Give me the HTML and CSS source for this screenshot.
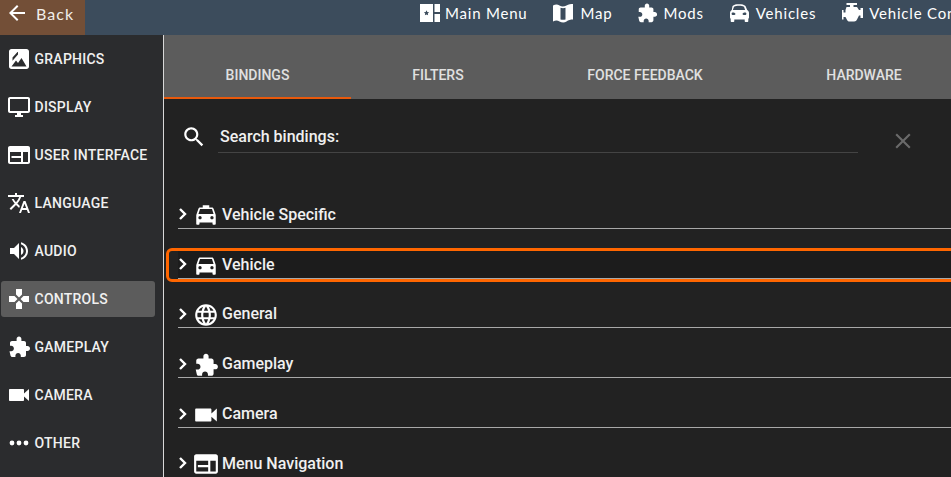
FILE: index.html
```html
<!DOCTYPE html>
<html lang="en">
<head>
<meta charset="utf-8">
<title>Controls</title>
<link rel="stylesheet" href="styles.css">
</head>
<body>
<svg class="defs" width="0" height="0" aria-hidden="true">
  <symbol id="i-car" viewBox="0 0 24 24"><path d="M18.92 6.01C18.72 5.42 18.16 5 17.5 5h-11c-.66 0-1.21.42-1.42 1.01L3 12v8c0 .55.45 1 1 1h1c.55 0 1-.45 1-1v-1h12v1c0 .55.45 1 1 1h1c.55 0 1-.45 1-1v-8l-2.08-5.99zM6.5 16c-.83 0-1.5-.67-1.5-1.5S5.67 13 6.5 13s1.5.67 1.5 1.5S7.33 16 6.5 16zm11 0c-.83 0-1.5-.67-1.5-1.5s.67-1.5 1.5-1.5 1.5.67 1.5 1.5-.67 1.5-1.5 1.5zM5 11l1.5-4.5h11L19 11H5z"/></symbol>
  <symbol id="i-taxi" viewBox="0 0 24 24"><path d="M18.92 6.01C18.72 5.42 18.16 5 17.5 5H15V3H9v2H6.5c-.66 0-1.21.42-1.42 1.01L3 12v8c0 .55.45 1 1 1h1c.55 0 1-.45 1-1v-1h12v1c0 .55.45 1 1 1h1c.55 0 1-.45 1-1v-8l-2.08-5.99zM6.5 16c-.83 0-1.5-.67-1.5-1.5S5.67 13 6.5 13s1.5.67 1.5 1.5S7.33 16 6.5 16zm11 0c-.83 0-1.5-.67-1.5-1.5s.67-1.5 1.5-1.5 1.5.67 1.5 1.5-.67 1.5-1.5 1.5zM5 11l1.5-4.5h11L19 11H5z"/></symbol>
  <symbol id="i-puzzle" viewBox="0 0 24 24"><path d="M20.5 11H19V8c0-1.1-.9-2-2-2h-2.6V3.900C14.400 2.600 13.300 1.500 12 1.500S9.600 2.600 9.600 3.900V6H5C3.900 6 3 6.900 3 8v2.800h1.200c1.490 0 2.700 1.210 2.700 2.700s-1.210 2.700-2.700 2.700H2.500l1 4.300c.2.900.900 1.500 1.800 1.500h3.100v-1.300c0-1.490 1.210-2.700 2.700-2.700 1.490 0 2.700 1.210 2.700 2.700V22H17c1.100 0 2-.900 2-2v-4h1.500c1.380 0 2.500-1.120 2.500-2.500S21.880 11 20.500 11z"/></symbol>
  <symbol id="i-cam" viewBox="0 0 24 24"><path d="M17 10.500V7c0-.55-.45-1-1-1H3c-.55 0-1 .45-1 1v10c0 .55.45 1 1 1h13c.55 0 1-.45 1-1v-3.500l5 4.500V6z"/></symbol>
  <symbol id="i-web" viewBox="0 0 24 24"><path d="M3 3h18c1.100 0 2 .9 2 2v14c0 1.100-.9 2-2 2H3c-1.100 0-2-.9-2-2V5c0-1.100.9-2 2-2zm0 6v10h11v-4H4.500v-2H14V9H3zm13 0v10h5V9h-5z"/></symbol>
</svg>

<header class="topbar">
  <a class="back">
    <svg class="ico back-ico" viewBox="0 0 24 24"><path d="M20 11H7.830l5.590-5.590L12 4l-8 8 8 8 1.410-1.410L7.830 13H20v-2z"/></svg>
    <span>Back</span>
  </a>
  <nav class="mainnav">
    <a class="navitem nav-main">
      <svg class="ico" viewBox="0 0 20 20"><path fill-rule="evenodd" d="M0 1h13v18H0V1zm6.500 6.300l.8 1.700 1.800.2-1.300 1.300.3 1.800-1.600-.9-1.600.9.300-1.800-1.300-1.300 1.800-.2.8-1.700zM14.500 1H20v8h-5.500V1zm0 10H20v8h-5.500v-8z"/></svg>
      <span>Main Menu</span>
    </a>
    <a class="navitem nav-map">
      <svg class="ico" viewBox="0 0 20 20"><path fill-rule="evenodd" d="M0 2.500C2.500 1 4.500 1 6.500 2.500 8.500 3.700 11 3.700 13.500 2.500 15.500 1 18 1 20 1v15.500c-2.500 0-4.500.5-6.500 2-2 1.200-4.500 1.200-7 0-2-1.500-4-1.500-6.500 0V2.500zm7.500 2.300v11.600c1.700.6 3.300.6 5 0V4.800c-1.700.6-3.300.6-5 0z"/></svg>
      <span>Map</span>
    </a>
    <a class="navitem nav-mods">
      <svg class="ico ico-l"><use href="#i-puzzle"/></svg>
      <span>Mods</span>
    </a>
    <a class="navitem nav-veh">
      <svg class="ico" viewBox="0 0 20 20"><path fill-rule="evenodd" d="M3.500 3C5 1.500 7 1.200 10 1.200s5 .3 6.500 1.800l1.700 4c1 .6 1.800 1.500 1.800 3v4.500c0 .6-.3 1-.7 1.200V18c0 .6-.4 1-1 1h-1.600c-.6 0-1-.4-1-1v-1.500H5.300V18c0 .6-.4 1-1 1H2.700c-.6 0-1-.4-1-1v-2.300c-.4-.2-.7-.6-.7-1.200V10c0-1.500.8-2.400 1.800-3l.7-4zM5 3.800L3.900 7h12.200L15 3.800C13.500 3 12 2.800 10 2.800s-3.500.2-5 1zM4 9.500c-.8 0-1.400.5-1.400 1.200s.6 1.300 1.400 1.300h1.500c.6 0 1-.5 1-1.200-.6-.8-1.500-1.300-2.500-1.300zm12 0c-1 0-1.900.5-2.500 1.300 0 .7.400 1.200 1 1.200H16c.8 0 1.400-.6 1.400-1.300s-.6-1.200-1.400-1.200z"/></svg>
      <span>Vehicles</span>
    </a>
    <a class="navitem nav-eng">
      <svg class="ico ico-l" viewBox="0 0 22 20"><path d="M5.500 0h10.500v2H12.500v2H16l2 3h1.500V5H22v10h-2.500v-2.500H18l-2 4c-.5 1-1.500 2-2.800 2H8.500c-1 0-1.800-.6-2.300-1.300L4.500 14H2.500v2.500H1V7h1.500v2.500H4.500V7l1-3H9V2H5.500V0z"/></svg>
      <span>Vehicle Controls</span>
    </a>
  </nav>
</header>

<div class="app">
  <aside class="sidebar">
    <a class="side">
      <svg class="ico" viewBox="0 0 24 24"><path fill-rule="evenodd" d="M2 4.500C2 3.100 3.100 2 4.500 2h15C20.900 2 22 3.100 22 4.500v15c0 1.400-1.100 2.500-2.500 2.500h-15C3.100 22 2 20.900 2 19.500v-15zM10.500 5l-5 5.500v3.200l5.500-6.200V5zM4.500 19.500h15L14.500 11l-3.500 5-2-2.500-4.500 6z"/></svg>
      <span>GRAPHICS</span>
    </a>
    <a class="side">
      <svg class="ico" viewBox="0 0 24 24"><path d="M21 2H3c-1.100 0-2 .9-2 2v12c0 1.100.9 2 2 2h7v2H8v2h8v-2h-2v-2h7c1.100 0 2-.9 2-2V4c0-1.100-.9-2-2-2zm0 14H3V4h18v12z"/></svg>
      <span>DISPLAY</span>
    </a>
    <a class="side">
      <svg class="ico"><use href="#i-web"/></svg>
      <span>USER INTERFACE</span>
    </a>
    <a class="side">
      <svg class="ico" viewBox="0 0 24 24"><path d="M12.870 15.070l-2.540-2.510.03-.03c1.740-1.940 2.980-4.170 3.710-6.530H17V4h-7V2H8v2H1v1.990h11.170C11.500 7.920 10.440 9.750 9 11.350 8.070 10.320 7.300 9.190 6.690 8h-2c.73 1.630 1.730 3.170 2.980 4.560l-5.090 5.020L4 19l5-5 3.110 3.110.76-2.040zM18.500 10h-2L12 22h2l1.120-3h4.750L21 22h2l-4.500-12zm-2.620 7l1.620-4.330L19.120 17h-3.240z"/></svg>
      <span>LANGUAGE</span>
    </a>
    <a class="side">
      <svg class="ico" viewBox="0 0 24 24"><path d="M3 9v6h4l5 5V4L7 9H3zm13.500 3c0-1.770-1.020-3.290-2.500-4.030v8.050c1.480-.73 2.500-2.250 2.500-4.020zM14 3.230v2.060c2.890.86 5 3.540 5 6.710s-2.110 5.850-5 6.710v2.060c4.010-.91 7-4.490 7-8.770s-2.990-7.860-7-8.770z"/></svg>
      <span>AUDIO</span>
    </a>
    <a class="side side-active">
      <svg class="ico" viewBox="0 0 24 24"><path d="M15 7.500V2H9v5.500l3 3 3-3zM7.500 9H2v6h5.500l3-3-3-3zM9 16.500V22h6v-5.500l-3-3-3 3zM16.500 9l-3 3 3 3H22V9h-5.500z"/></svg>
      <span>CONTROLS</span>
    </a>
    <a class="side">
      <svg class="ico"><use href="#i-puzzle"/></svg>
      <span>GAMEPLAY</span>
    </a>
    <a class="side">
      <svg class="ico"><use href="#i-cam"/></svg>
      <span>CAMERA</span>
    </a>
    <a class="side">
      <svg class="ico" viewBox="0 0 24 24"><circle cx="5" cy="12" r="2.400"/><circle cx="12" cy="12" r="2.400"/><circle cx="19" cy="12" r="2.400"/></svg>
      <span>OTHER</span>
    </a>
  </aside>

  <main class="content">
    <div class="tabs">
      <a class="tab tab-bindings tab-active">BINDINGS</a>
      <a class="tab tab-filters">FILTERS</a>
      <a class="tab tab-ff">FORCE FEEDBACK</a>
      <a class="tab tab-hw">HARDWARE</a>
    </div>

    <div class="search">
      <svg class="ico search-ico" viewBox="0 0 24 24"><path d="M15.500 14h-.79l-.28-.27C15.410 12.590 16 11.110 16 9.500 16 5.910 13.090 3 9.500 3S3 5.910 3 9.500 5.910 16 9.500 16c1.610 0 3.090-.59 4.230-1.570l.27.28v.79l5 4.990L20.490 19l-4.990-5zm-6 0C7.010 14 5 11.990 5 9.500S7.010 5 9.500 5 14 7.010 14 9.500 11.990 14 9.500 14z"/></svg>
      <div class="search-field">Search bindings:</div>
      <svg class="clear-ico" viewBox="0 0 24 24"><path d="M19 6.410L17.590 5 12 10.590 6.410 5 5 6.410 10.590 12 5 17.590 6.410 19 12 13.410 17.590 19 19 17.590 13.410 12z"/></svg>
    </div>

    <section class="groups">
      <div class="group">
        <svg class="chev" viewBox="0 0 10 14"><path d="M2 2l5 5-5 5"/></svg>
        <svg class="ico group-ico"><use href="#i-taxi"/></svg>
        <span>Vehicle Specific</span>
      </div>
      <div class="group group-focus">
        <svg class="chev" viewBox="0 0 10 14"><path d="M2 2l5 5-5 5"/></svg>
        <svg class="ico group-ico"><use href="#i-car"/></svg>
        <span>Vehicle</span>
      </div>
      <div class="group">
        <svg class="chev" viewBox="0 0 10 14"><path d="M2 2l5 5-5 5"/></svg>
        <svg class="ico group-ico" viewBox="0 0 24 24"><path d="M11.990 2C6.470 2 2 6.480 2 12s4.470 10 9.990 10C17.520 22 22 17.520 22 12S17.520 2 11.990 2zm6.930 6h-2.950c-.32-1.250-.78-2.450-1.380-3.560 1.840.63 3.370 1.910 4.330 3.560zM12 4.040c.83 1.200 1.480 2.530 1.910 3.960h-3.820c.43-1.430 1.080-2.760 1.910-3.960zM4.260 14C4.100 13.360 4 12.690 4 12s.1-1.360.26-2h3.380c-.08.66-.14 1.320-.14 2 0 .68.06 1.340.14 2H4.260zm.82 2h2.950c.32 1.250.78 2.450 1.380 3.560-1.840-.63-3.370-1.900-4.330-3.560zm2.950-8H5.080c.96-1.660 2.490-2.930 4.330-3.560C8.810 5.550 8.350 6.750 8.030 8zM12 19.960c-.83-1.200-1.480-2.530-1.910-3.960h3.820c-.43 1.430-1.080 2.760-1.910 3.960zM14.340 14H9.660c-.09-.66-.16-1.320-.16-2 0-.68.07-1.350.16-2h4.680c.09.65.16 1.320.16 2 0 .68-.07 1.340-.16 2zm.25 5.560c.6-1.110 1.060-2.310 1.380-3.560h2.950c-.96 1.650-2.490 2.930-4.330 3.560zM16.360 14c.08-.66.14-1.320.14-2 0-.68-.06-1.340-.14-2h3.380c.16.64.26 1.310.26 2s-.1 1.360-.26 2h-3.380z"/></svg>
        <span>General</span>
      </div>
      <div class="group">
        <svg class="chev" viewBox="0 0 10 14"><path d="M2 2l5 5-5 5"/></svg>
        <svg class="ico group-ico"><use href="#i-puzzle"/></svg>
        <span>Gameplay</span>
      </div>
      <div class="group">
        <svg class="chev" viewBox="0 0 10 14"><path d="M2 2l5 5-5 5"/></svg>
        <svg class="ico group-ico"><use href="#i-cam"/></svg>
        <span>Camera</span>
      </div>
      <div class="group">
        <svg class="chev" viewBox="0 0 10 14"><path d="M2 2l5 5-5 5"/></svg>
        <svg class="ico group-ico"><use href="#i-web"/></svg>
        <span>Menu Navigation</span>
      </div>
    </section>
  </main>
</div>
</body>
</html>
```
FILE: styles.css
```css
* { box-sizing: border-box; }
html, body { margin: 0; height: 100%; overflow: hidden; }
body {
  width: 951px;
  height: 477px;
  background: #222;
  color: #fff;
  font-family: "Roboto", "Liberation Sans", sans-serif;
}
.defs { position: absolute; }
.ico { width: 24px; height: 24px; fill: #fff; flex: none; display: block; }

.topbar {
  height: 35px;
  display: flex;
  align-items: flex-start;
  background: #3c4c5c;
  white-space: nowrap;
  overflow: hidden;
  font-family: "Lato", "Open Sans", sans-serif;
  font-size: 15px;
  letter-spacing: 0.8px;
}
.back {
  width: 85px;
  height: 35px;
  flex: none;
  display: flex;
  align-items: center;
  gap: 7px;
  padding: 0 0 9px 5px;
  background: #734f37;
  font-size: 16px;
  letter-spacing: 1.1px;
  color: #f1eeea;
}
.back-ico { width: 24px; height: 24px; }
.mainnav { display: flex; align-items: center; height: 26px; margin-left: 335px; }
.navitem { display: flex; align-items: center; gap: 5px; }
.navitem .ico { width: 20px; height: 20px; }
.navitem .ico-l { width: 22px; height: 22px; }
.nav-map { margin-left: 25px; gap: 8px; }
.nav-mods { margin-left: 24px; gap: 5px; }
.nav-veh { margin-left: 25px; gap: 7px; }
.nav-eng { margin-left: 25px; gap: 6px; }

.app { display: flex; height: 442px; }
.sidebar {
  width: 164px;
  flex: none;
  background: #2b2c2e;
  border-right: 1px solid #d8d8d8;
  padding: 6px 8px 0 1px;
  display: flex;
  flex-direction: column;
  gap: 12px;
}
.side {
  height: 36px;
  flex: none;
  display: flex;
  align-items: center;
  gap: 3.500px;
  padding-left: 6px;
  border-radius: 3px;
  font-size: 14px;
  font-weight: 500;
  letter-spacing: 0.25px;
  color: #f0f0f0;
  white-space: nowrap;
}
.side-active { background: #5c5c5c; }

.content { flex: 1; min-width: 0; overflow: hidden; background: #222; }
.tabs { display: flex; height: 64px; background: #5c5c5c; }
.tab {
  flex: none;
  display: flex;
  align-items: center;
  justify-content: center;
  padding-top: 15px;
  font-size: 14px;
  font-weight: 500;
  color: #e0e0e0;
}
.tab-bindings { width: 187px; }
.tab-filters { width: 174px; }
.tab-ff { width: 240px; }
.tab-hw { width: 198px; }
.tab-active { box-shadow: inset 0 -2px 0 #e8590c; }

.search {
  display: flex;
  align-items: flex-start;
  height: 80px;
  padding: 26px 0 0 18px;
}
.search-ico { width: 26px; height: 26px; margin: -1px 11px 0 -1px; }
.search-field {
  width: 640px;
  height: 28px;
  padding-left: 2px;
  border-bottom: 1px solid #444;
  font-size: 16px;
  font-weight: 500;
  line-height: 24px;
  color: #f0f0f0;
}
.clear-ico { width: 26px; height: 26px; margin: 3px 0 0 32px; fill: #6a6a6a; flex: none; }

.groups { display: flex; flex-direction: column; padding-left: 14px; }
.group {
  height: 49.800px;
  flex: none;
  display: flex;
  align-items: center;
  padding-top: 22px;
  border-bottom: 1px solid #a8a8a8;
  font-size: 16px;
  font-weight: 500;
  color: #f0f0f0;
  position: relative;
}
.chev { width: 10px; height: 14px; fill: none; stroke: #fff; stroke-width: 2.400; margin-right: 9px; flex: none; }
.group-ico { width: 26px; height: 26px; margin: 2px 3px 0 -4px; }
.group-focus { background: linear-gradient(#222 0 19px, #1c1c1c 19px); }
.group-focus::after {
  content: "";
  position: absolute;
  left: -12px;
  right: -8px;
  top: 19px;
  bottom: -4px;
  border: 3px solid #ff6600;
  border-radius: 6px;
  pointer-events: none;
}
```
